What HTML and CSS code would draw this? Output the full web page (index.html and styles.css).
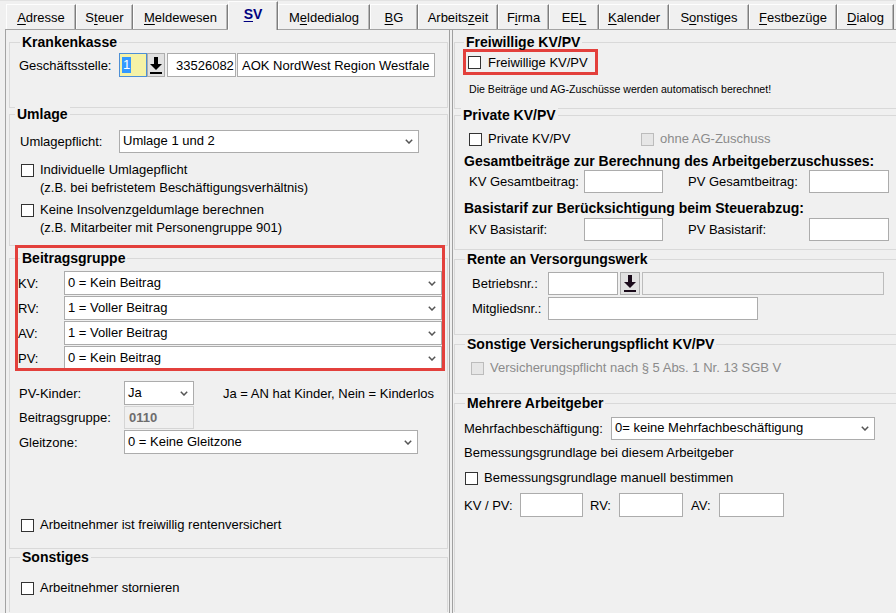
FILE: index.html
```html
<!DOCTYPE html>
<html lang="de">
<head>
<meta charset="utf-8">
<title>SV</title>
<link rel="stylesheet" href="styles.css">
</head>
<body>
<div class="tabs">
  <div class="tab"><u>A</u>dresse</div>
  <div class="tab">S<u>t</u>euer</div>
  <div class="tab"><u>M</u>eldewesen</div>
  <div class="tab active"><u>S</u>V</div>
  <div class="tab">M<u>e</u>ldedialog</div>
  <div class="tab"><u>B</u>G</div>
  <div class="tab">Arbeits<u>z</u>eit</div>
  <div class="tab">F<u>i</u>rma</div>
  <div class="tab">EE<u>L</u></div>
  <div class="tab"><u>K</u>alender</div>
  <div class="tab">S<u>o</u>nstiges</div>
  <div class="tab"><u>F</u>estbezüge</div>
  <div class="tab"><u>D</u>ialog</div>
</div>

<div class="panel">
  <div class="left">
    <div class="group g-kk">
      <div class="gtitle ml10">Krankenkasse</div>
      <div class="row kk-row">
        <span class="lbl w100">Geschäftsstelle:</span>
        <span class="tb focus w28"><span class="selected">1</span></span>
        <span class="btn w18"><svg width="12" height="17" viewBox="0 0 12 17"><rect x="4" y="0" width="4" height="7" fill="#000"/><polygon points="0,7 12,7 6,13" fill="#000"/><rect x="0" y="15" width="12" height="2" fill="#000"/></svg></span>
        <span class="tb w69 ml2 pl8">33526082</span>
        <span class="tb w198 ml1 aok">AOK NordWest Region Westfale</span>
      </div>
    </div>

    <div class="group g-um">
      <div class="gtitle ml5">Umlage</div>
      <div class="row um-row">
        <span class="lbl w99">Umlagepflicht:</span>
        <div class="dd w300"><span>Umlage 1 und 2</span><svg width="8" height="5" viewBox="0 0 8 5"><polyline points="0.8,0.8 4,4 7.2,0.8" fill="none" stroke="#555" stroke-width="1.5"/></svg></div>
      </div>
      <div class="cbrow um-cb1">
        <span class="cb"></span>
        <div><div class="line">Individuelle Umlagepflicht</div><div class="line">(z.B. bei befristetem Beschäftigungsverhältnis)</div></div>
      </div>
      <div class="cbrow um-cb2">
        <span class="cb"></span>
        <div><div class="line">Keine Insolvenzgeldumlage berechnen</div><div class="line">(z.B. Mitarbeiter mit Personengruppe 901)</div></div>
      </div>
    </div>

    <div class="group g-bg">
      <div class="gtitle ml10">Beitragsgruppe</div>
      <div class="bg-rows">
        <div class="row"><span class="lbl w46">KV:</span><div class="dd w378 h24"><span>0 = Kein Beitrag</span><svg width="8" height="5" viewBox="0 0 8 5"><polyline points="0.8,0.8 4,4 7.2,0.8" fill="none" stroke="#555" stroke-width="1.5"/></svg></div></div>
        <div class="row"><span class="lbl w46">RV:</span><div class="dd w378 h24"><span>1 = Voller Beitrag</span><svg width="8" height="5" viewBox="0 0 8 5"><polyline points="0.8,0.8 4,4 7.2,0.8" fill="none" stroke="#555" stroke-width="1.5"/></svg></div></div>
        <div class="row"><span class="lbl w46">AV:</span><div class="dd w378 h24"><span>1 = Voller Beitrag</span><svg width="8" height="5" viewBox="0 0 8 5"><polyline points="0.8,0.8 4,4 7.2,0.8" fill="none" stroke="#555" stroke-width="1.5"/></svg></div></div>
        <div class="row"><span class="lbl w46">PV:</span><div class="dd w378 h24"><span>0 = Kein Beitrag</span><svg width="8" height="5" viewBox="0 0 8 5"><polyline points="0.8,0.8 4,4 7.2,0.8" fill="none" stroke="#555" stroke-width="1.5"/></svg></div></div>
      </div>
      <div class="pv-rows">
        <div class="row"><span class="lbl w105">PV-Kinder:</span><div class="dd w70 h24"><span>Ja</span><svg width="8" height="5" viewBox="0 0 8 5"><polyline points="0.8,0.8 4,4 7.2,0.8" fill="none" stroke="#555" stroke-width="1.5"/></svg></div><span class="info">Ja = AN hat Kinder, Nein = Kinderlos</span></div>
        <div class="row"><span class="lbl w105">Beitragsgruppe:</span><span class="tb ro w70 h23">0110</span></div>
        <div class="row"><span class="lbl w105">Gleitzone:</span><div class="dd w294 h24"><span>0 = Keine Gleitzone</span><svg width="8" height="5" viewBox="0 0 8 5"><polyline points="0.8,0.8 4,4 7.2,0.8" fill="none" stroke="#555" stroke-width="1.5"/></svg></div></div>
      </div>
      <div class="cbrow bg-cb">
        <span class="cb"></span>
        <div class="line">Arbeitnehmer ist freiwillig rentenversichert</div>
      </div>
      <div class="mark mark-bg"></div>
    </div>

    <div class="group g-so open">
      <div class="gtitle ml10">Sonstiges</div>
      <div class="cbrow so-cb">
        <span class="cb"></span>
        <div class="line">Arbeitnehmer stornieren</div>
      </div>
    </div>
  </div>

  <div class="splitter"></div>

  <div class="right">
    <div class="group g-fw">
      <div class="gtitle ml9">Freiwillige KV/PV</div>
      <div class="redbox">
        <span class="cb"></span>
        <span class="cbtext">Freiwillige KV/PV</span>
      </div>
      <div class="small">Die Beiträge und AG-Zuschüsse werden automatisch berechnet!</div>
    </div>

    <div class="group g-pr">
      <div class="gtitle ml6">Private KV/PV</div>
      <div class="row pr-cbs">
        <div class="cbitem w172"><span class="cb"></span><span class="cbtext">Private KV/PV</span></div>
        <div class="cbitem dis"><span class="cb off"></span><span class="cbtext">ohne AG-Zuschuss</span></div>
      </div>
      <div class="subhead sh1">Gesamtbeiträge zur Berechnung des Arbeitgeberzuschusses:</div>
      <div class="row pr-in">
        <span class="lbl w115">KV Gesamtbeitrag:</span><span class="tb w79 h23"></span>
        <span class="lbl w121 ml25">PV Gesamtbeitrag:</span><span class="tb w80 h23"></span>
      </div>
      <div class="subhead sh2">Basistarif zur Berücksichtigung beim Steuerabzug:</div>
      <div class="row pr-in pr-in2">
        <span class="lbl w115">KV Basistarif:</span><span class="tb w79 h23"></span>
        <span class="lbl w121 ml25">PV Basistarif:</span><span class="tb w80 h23"></span>
      </div>
    </div>

    <div class="group g-re">
      <div class="gtitle ml10">Rente an Versorgungswerk</div>
      <div class="row re-row1">
        <span class="lbl w76">Betriebsnr.:</span>
        <span class="tb w70 h23"></span>
        <span class="btn w20 h23 ml2"><svg width="12" height="17" viewBox="0 0 12 17"><rect x="4" y="0" width="4" height="7" fill="#1a0a1a"/><polygon points="0,7 12,7 6,13" fill="#1a0a1a"/><rect x="0" y="15" width="12" height="2" fill="#1a0a1a"/></svg></span>
        <span class="tb gray w242 h23 ml2"></span>
      </div>
      <div class="row re-row2">
        <span class="lbl w76">Mitgliedsnr.:</span>
        <span class="tb w210 h23"></span>
      </div>
    </div>

    <div class="group g-sv">
      <div class="gtitle ml10">Sonstige Versicherungspflicht KV/PV</div>
      <div class="cbitem dis sv-cb"><span class="cb off"></span><span class="cbtext">Versicherungspflicht nach § 5 Abs. 1 Nr. 13 SGB V</span></div>
    </div>

    <div class="group g-ma open">
      <div class="gtitle ml10">Mehrere Arbeitgeber</div>
      <div class="row ma-row">
        <span class="lbl w147">Mehrfachbeschäftigung:</span>
        <div class="dd w264"><span>0= keine Mehrfachbeschäftigung</span><svg width="8" height="5" viewBox="0 0 8 5"><polyline points="0.8,0.8 4,4 7.2,0.8" fill="none" stroke="#555" stroke-width="1.5"/></svg></div>
      </div>
      <div class="line ma-text">Bemessungsgrundlage bei diesem Arbeitgeber</div>
      <div class="cbitem ma-cb"><span class="cb"></span><span class="cbtext">Bemessungsgrundlage manuell bestimmen</span></div>
      <div class="row ma-in">
        <span class="lbl w56">KV / PV:</span><span class="tb w63 h24"></span>
        <span class="lbl w29 ml7">RV:</span><span class="tb w64 h24"></span>
        <span class="lbl w28 ml8">AV:</span><span class="tb w65 h24"></span>
      </div>
    </div>
  </div>
</div>
</body>
</html>
```

FILE: styles.css
```css
* { box-sizing: border-box; }
html, body { margin: 0; padding: 0; }
body {
  width: 896px;
  height: 613px;
  overflow: hidden;
  background: #f0f0f0;
  font-family: "Liberation Sans", Arial, sans-serif;
  font-size: 13px;
  color: #000;
}
u { text-decoration: underline; text-underline-offset: 2px; }

/* Tabs */
.tabs {
  display: flex;
  align-items: flex-end;
  height: 29px;
  padding-left: 6px;
  border-top: 1px solid #e2e2e2;
}
.tab {
  height: 25px;
  display: flex;
  align-items: center;
  justify-content: center;
  border-top: 1px solid #fdfdfd;
  border-left: 1px solid #fdfdfd;
  border-right: 1px solid #7d7d7d;
  box-shadow: inset -1px 0 #b9b9b9;
  background: #f0f0f0;
  white-space: nowrap;
  padding-top: 1px;
}
.tab:nth-child(1) { width: 70px; }
.tab:nth-child(2) { width: 57px; }
.tab:nth-child(3) { width: 95px; }
.tab:nth-child(4) { width: 50px; }
.tab:nth-child(5) { width: 92px; }
.tab:nth-child(6) { width: 48px; }
.tab:nth-child(7) { width: 80px; }
.tab:nth-child(8) { width: 51px; }
.tab:nth-child(9) { width: 50px; }
.tab:nth-child(10) { width: 70px; }
.tab:nth-child(11) { width: 80px; }
.tab:nth-child(12) { width: 88px; }
.tab:nth-child(13) { width: 57px; }
.tab.active {
  height: 29px;
  margin-bottom: -1px;
  position: relative;
  z-index: 1;
  align-items: flex-start;
  padding-top: 4px;
  font-weight: bold;
  font-size: 14px;
  color: #000080;
  background: #f0f0f0;
}

/* Panel */
.panel {
  display: flex;
  height: 584px;
  margin-left: 5px;
  border-top: 1px solid #a3a3a3;
  overflow: hidden;
}
.left {
  width: 444px;
  flex: none;
  border-left: 1px solid #a3a3a3;
  padding: 12px 0 0 3px;
}
.splitter {
  width: 4px;
  flex: none;
  border-left: 1px solid #a0a0a0;
  border-right: 1px solid #a0a0a0;
}
.right {
  flex: 1;
  padding: 12px 0 0 1px;
}

/* Group boxes */
.group {
  border: 1px solid #d9d9d9;
  position: relative;
}
.left .group { width: 439px; }
.right .group { border-right: none; }
.group.open { border-bottom: none; }
.gtitle {
  width: max-content;
  margin-top: -9px;
  padding: 0 2px;
  background: #f0f0f0;
  font-weight: bold;
  font-size: 14px;
  line-height: 16px;
}

.row { display: flex; align-items: center; }
.lbl { flex: none; white-space: nowrap; }
.line { line-height: 18px; white-space: nowrap; }

.tb {
  flex: none;
  display: flex;
  align-items: center;
  height: 24px;
  background: #fff;
  border: 1px solid #acacac;
  padding-left: 3px;
  white-space: nowrap;
  overflow: hidden;
}
.tb.aok { padding-left: 4px; }
.tb.focus {
  background: #f5f2a6;
  border-color: #4d8fd6;
  padding-left: 2px;
}
.selected {
  background: #3399ff;
  color: #fff;
  line-height: 16px;
  padding: 0 1px;
}
.tb.ro {
  background: #f0f0f0;
  border-color: #d5d5d5;
  color: #6d6d6d;
  font-weight: bold;
  padding-left: 4px;
}
.tb.gray {
  background: #f0f0f0;
  border-color: #bcbcbc;
}
.btn {
  flex: none;
  display: flex;
  align-items: center;
  justify-content: center;
  height: 24px;
  background: #e1e1e1;
  border: 1px solid #adadad;
}
.dd {
  flex: none;
  display: flex;
  align-items: center;
  justify-content: space-between;
  height: 23px;
  background: #fff;
  border: 1px solid #acacac;
  padding: 0 5px 2px 3px;
  white-space: nowrap;
}
.dd svg { margin-top: 2px; }

.cb {
  flex: none;
  width: 13px;
  height: 13px;
  border: 1px solid #333;
  background: #fff;
}
.cb.off {
  border-color: #bcbcbc;
  background: #e6e6e6;
}
.cbrow {
  display: flex;
  align-items: flex-start;
  gap: 6px;
}
.cbrow .cb { margin-top: 3px; }
.cbitem {
  display: flex;
  align-items: center;
  gap: 6px;
  line-height: 18px;
  white-space: nowrap;
}
.cbitem.dis { color: #8b8b8b; }

/* Left: Krankenkasse */
.g-kk { height: 66px; }
.kk-row { margin-top: 3px; padding-left: 9px; }

/* Umlage */
.g-um { height: 132px; margin-top: 6px; }
.um-row { margin-top: 8px; padding-left: 10px; }
.um-cb1 { margin-top: 8px; padding-left: 11px; }
.um-cb2 { margin-top: 4px; padding-left: 11px; }

/* Beitragsgruppe */
.g-bg { height: 291px; margin-top: 12px; }
.bg-rows {
  margin-top: 5px;
  padding-left: 8px;
  display: flex;
  flex-direction: column;
  gap: 1px;
}
.pv-rows {
  margin-top: 11px;
  padding-left: 9px;
  display: flex;
  flex-direction: column;
  gap: 1px;
}
.info { margin-left: 29px; white-space: nowrap; }
.bg-cb { margin-top: 62px; padding-left: 11px; }
.mark {
  position: absolute;
  border: 3px solid #e3403c;
}
.mark-bg {
  left: 5px;
  top: -14px;
  width: 430px;
  height: 126px;
}

/* Sonstiges */
.g-so { height: 55px; margin-top: 8px; }
.so-cb { margin-top: 14px; padding-left: 11px; }

/* Right: Freiwillige */
.g-fw { height: 67px; }
.redbox {
  display: flex;
  align-items: center;
  gap: 7px;
  width: 135px;
  height: 26px;
  margin: -1px 0 0 8px;
  border: 3px solid #e3403c;
  padding-left: 2px;
  white-space: nowrap;
}
.small {
  margin-top: 7px;
  padding-left: 14px;
  font-size: 10.6px;
  line-height: 14px;
  white-space: nowrap;
}

/* Private */
.g-pr { height: 135px; margin-top: 6px; }
.pr-cbs { margin-top: 7px; padding-left: 14px; }
.subhead {
  padding-left: 9px;
  font-weight: bold;
  font-size: 14px;
  line-height: 18px;
  white-space: nowrap;
}
.sh1 { margin-top: 4px; }
.sh2 { margin-top: 6px; }
.pr-in { padding-left: 14px; }
.pr-in2 { margin-top: 1px; }

/* Rente */
.g-re { height: 76px; margin-top: 9px; }
.re-row1 { margin-top: 5px; padding-left: 17px; }
.re-row2 { margin-top: 2px; padding-left: 17px; }

/* Sonstige Versicherungspflicht */
.g-sv { height: 50px; margin-top: 9px; }
.sv-cb { margin-top: 7px; padding-left: 16px; }

/* Mehrere Arbeitgeber */
.g-ma { height: 209px; margin-top: 9px; }
.ma-row { margin-top: 6px; padding-left: 9px; }
.ma-text { margin-top: 4px; padding-left: 9px; }
.ma-cb { margin-top: 7px; padding-left: 10px; }
.ma-in { margin-top: 6px; padding-left: 9px; }

/* sizes */
.w18 { width: 18px; }
.w20 { width: 20px; }
.w28 { width: 28px; }
.w29 { width: 29px; }
.w46 { width: 46px; }
.w56 { width: 56px; }
.w63 { width: 63px; }
.w64 { width: 64px; }
.w65 { width: 65px; }
.w69 { width: 69px; }
.w70 { width: 70px; }
.w76 { width: 76px; }
.w79 { width: 79px; }
.w80 { width: 80px; }
.w99 { width: 99px; }
.w100 { width: 100px; }
.w105 { width: 105px; }
.w115 { width: 115px; }
.w121 { width: 121px; }
.w147 { width: 147px; }
.w172 { width: 172px; }
.w198 { width: 198px; }
.w210 { width: 210px; }
.w242 { width: 242px; }
.w264 { width: 264px; }
.w294 { width: 294px; }
.w300 { width: 300px; }
.w378 { width: 378px; }
.h23 { height: 23px; }
.h24 { height: 24px; }
.ml1 { margin-left: 1px; }
.ml2 { margin-left: 2px; }
.ml5 { margin-left: 5px; }
.ml6 { margin-left: 6px; }
.ml7 { margin-left: 7px; }
.ml8 { margin-left: 8px; }
.ml9 { margin-left: 9px; }
.ml10 { margin-left: 10px; }
.ml25 { margin-left: 25px; }
.pl8 { padding-left: 8px; }
```
